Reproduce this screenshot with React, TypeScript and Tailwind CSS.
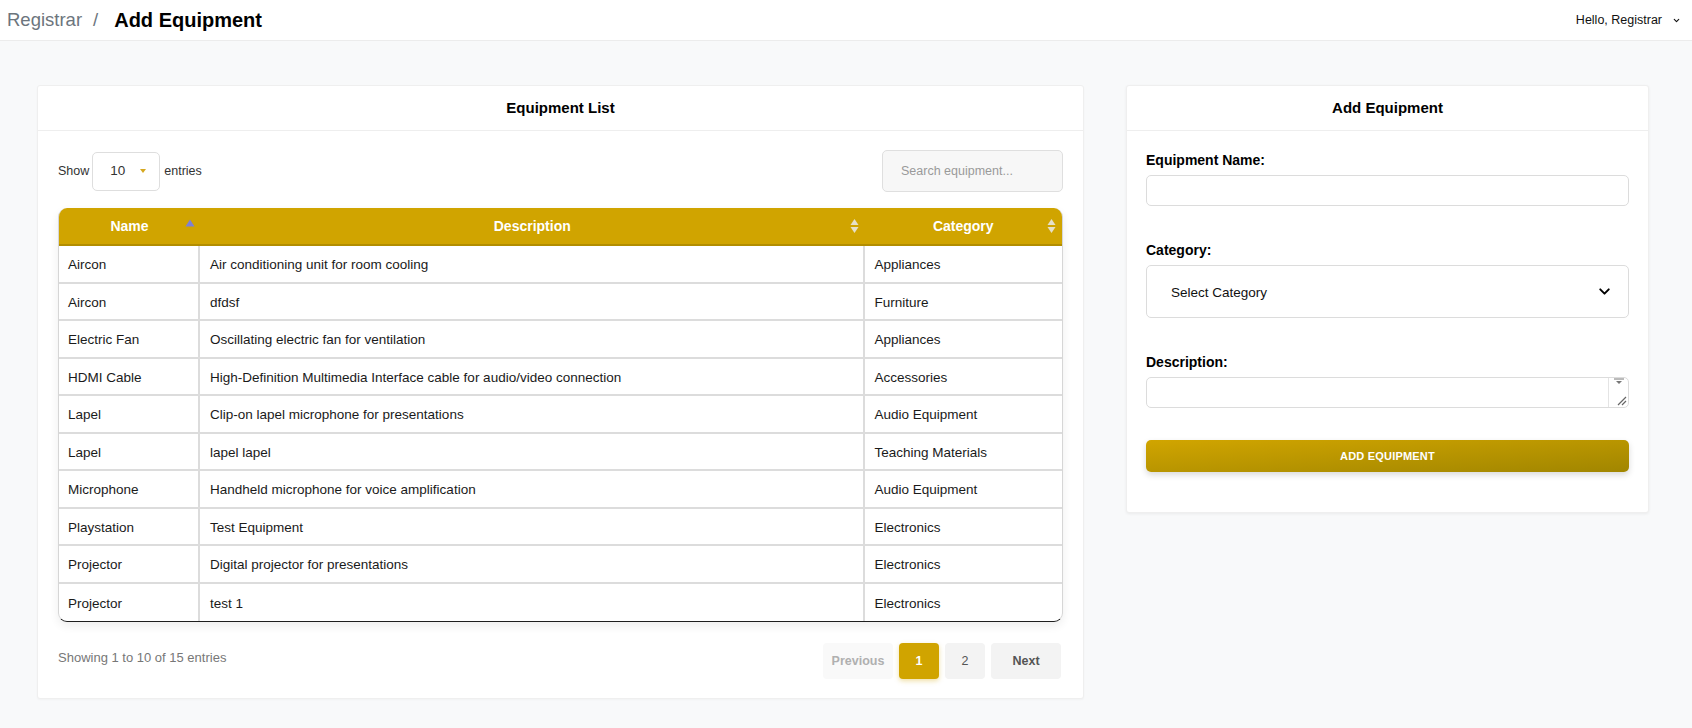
import React from "react";
import { ChevronDown } from "lucide-react";

const equipment = [
  { name: "Aircon", description: "Air conditioning unit for room cooling", category: "Appliances" },
  { name: "Aircon", description: "dfdsf", category: "Furniture" },
  { name: "Electric Fan", description: "Oscillating electric fan for ventilation", category: "Appliances" },
  { name: "HDMI Cable", description: "High-Definition Multimedia Interface cable for audio/video connection", category: "Accessories" },
  { name: "Lapel", description: "Clip-on lapel microphone for presentations", category: "Audio Equipment" },
  { name: "Lapel", description: "lapel lapel", category: "Teaching Materials" },
  { name: "Microphone", description: "Handheld microphone for voice amplification", category: "Audio Equipment" },
  { name: "Playstation", description: "Test Equipment", category: "Electronics" },
  { name: "Projector", description: "Digital projector for presentations", category: "Electronics" },
  { name: "Projector", description: "test 1", category: "Electronics" },
];

// up/down arrows for sortable columns
const SortBoth = () => (
  <svg width="9" height="16" viewBox="0 0 9 16" className="absolute right-[6px] top-1/2 -translate-y-1/2">
    <path d="M4.5 1 L8.5 7 L0.5 7 Z" fill="#e6e0c8" />
    <path d="M4.5 15 L8.5 9 L0.5 9 Z" fill="#e6e0c8" />
  </svg>
);

const SortAsc = () => (
  <svg width="10" height="8" viewBox="0 0 10 8" className="absolute right-[5px] top-[11px]">
    <path d="M5 0.5 L9.5 7.5 L0.5 7.5 Z" fill="#7d80d6" />
  </svg>
);

const App = () => {
  return (
    <div className="min-h-screen bg-[#f8f9fa] font-['Liberation_Sans',Arial,sans-serif] text-[#1a1a1a]">
      {/* Top bar */}
      <header className="h-[41px] bg-white border-b border-[#ececec] flex items-center justify-between pl-[7px] pr-[11px]">
        <div className="flex items-center">
          <span className="text-[18.5px] text-[#6c757d]">Registrar</span>
          <span className="text-[18.5px] text-[#6c757d] ml-[11px] mr-[16px]">/</span>
          <span className="text-[20px] font-bold text-black">Add Equipment</span>
        </div>
        <div className="flex items-center gap-[10px] text-[12.5px] text-[#111]">
          <span>Hello, Registrar</span>
          <ChevronDown className="w-[9px] h-[9px]" strokeWidth={3} />
        </div>
      </header>

      <main className="flex items-start gap-[42px] pl-[37px] pt-[44px] pb-[30px]">
        {/* Equipment list card */}
        <section className="w-[1047px] bg-white border border-[#efefef] rounded-[3px] shadow-[0_1px_2px_rgba(0,0,0,0.03)]">
          <div className="h-[45px] border-b border-[#eeeeee] flex items-center justify-center">
            <h2 className="text-[15px] font-bold text-black">Equipment List</h2>
          </div>

          <div className="px-[20px] pt-[19px] pb-[19px]">
            <div className="flex items-center justify-between">
              <div className="flex items-center text-[12.5px] text-[#333]">
                <span>Show</span>
                <div className="ml-[3px] mr-[4px] w-[68px] h-[39px] border border-[#dedede] rounded-[5px] flex items-center pl-[17px] pr-[13px] justify-between">
                  <span className="text-[13.5px]">10</span>
                  <svg width="6" height="4" viewBox="0 0 6 4">
                    <path d="M0 0 L6 0 L3 4 Z" fill="#d6a820" />
                  </svg>
                </div>
                <span>entries</span>
              </div>
              <input
                placeholder="Search equipment..."
                className="w-[181px] h-[42px] bg-[#f7f7f7] border border-[#dfdfdf] rounded-[5px] pl-[18px] text-[12.5px] placeholder:text-[#9a9a9a] outline-none"
              />
            </div>

            {/* Table */}
            <div className="mt-[16px] rounded-[9px] overflow-hidden border-x border-[#d6d6d6] border-b border-b-[#1f1f1f] shadow-[0_4px_10px_rgba(0,0,0,0.07)]">
              <div className="grid grid-cols-[141px_664.5px_1fr] h-[38px] bg-[#d0a400] border-b-2 border-[#b28d00] text-white text-[14px] font-bold">
                <div className="relative flex items-center justify-center">
                  Name
                  <SortAsc />
                </div>
                <div className="relative flex items-center justify-center">
                  Description
                  <SortBoth />
                </div>
                <div className="relative flex items-center justify-center">
                  Category
                  <SortBoth />
                </div>
              </div>
              {equipment.map((item, i) => (
                <div
                  key={i}
                  className={`grid grid-cols-[141px_664.5px_1fr] h-[37.5px] text-[13.5px] ${
                    i < equipment.length - 1 ? "border-b-2 border-[#dcdcdc]" : ""
                  }`}
                >
                  <div className="flex items-center pt-[3px] pl-[9px] border-r-2 border-[#dcdcdc]">{item.name}</div>
                  <div className="flex items-center pt-[3px] pl-[10px] border-r-2 border-[#dcdcdc]">{item.description}</div>
                  <div className="flex items-center pt-[3px] pl-[10px]">{item.category}</div>
                </div>
              ))}
            </div>

            <div className="mt-[21px] flex items-center justify-between">
              <span className="text-[13px] text-[#777] mb-[6px]">Showing 1 to 10 of 15 entries</span>
              <div className="flex items-center gap-[6px] mr-[2px] text-[12.5px]">
                <button className="w-[70px] h-[36px] rounded-[4px] bg-[#f9f9f9] text-[#b0b0b0] font-bold">Previous</button>
                <button className="w-[40px] h-[36px] rounded-[4px] bg-[#d0a400] text-white font-bold shadow-[0_2px_5px_rgba(208,164,0,0.35)]">1</button>
                <button className="w-[40px] h-[36px] rounded-[4px] bg-[#f3f3f3] text-[#555]">2</button>
                <button className="w-[70px] h-[36px] rounded-[4px] bg-[#f3f3f3] text-[#555] font-bold">Next</button>
              </div>
            </div>
          </div>
        </section>

        {/* Add equipment form */}
        <section className="w-[523px] bg-white border border-[#efefef] rounded-[3px] shadow-[0_1px_3px_rgba(0,0,0,0.06)]">
          <div className="h-[45px] border-b border-[#eeeeee] flex items-center justify-center">
            <h2 className="text-[15px] font-bold text-black">Add Equipment</h2>
          </div>

          <form className="px-[19px] pt-[21px] pb-[40px] flex flex-col">
            <label className="text-[14px] font-bold leading-[17px] text-black">Equipment Name:</label>
            <input className="mt-[6px] h-[31px] border border-[#dcdcdc] rounded-[5px] px-[10px] text-[13.5px] outline-none" />

            <label className="mt-[36px] text-[14px] font-bold leading-[17px] text-black">Category:</label>
            <div className="mt-[6px] h-[53px] border border-[#dcdcdc] rounded-[5px] flex items-center justify-between pl-[24px] pr-[15px]">
              <span className="text-[13.5px] text-[#111] pt-[3px]">Select Category</span>
              <ChevronDown className="w-[17px] h-[17px] text-black" strokeWidth={2.75} />
            </div>

            <label className="mt-[36px] text-[14px] font-bold leading-[17px] text-black">Description:</label>
            <div className="relative mt-[6px] h-[31px]">
              <textarea className="block w-full h-[31px] border border-[#dcdcdc] rounded-[5px] px-[10px] text-[13.5px] resize-none outline-none" />
              <div className="absolute right-[1px] top-[1px] bottom-[1px] w-[20px] border-l border-[#e4e4e4] flex flex-col items-center justify-between">
                <svg width="10" height="6" viewBox="0 0 10 6">
                  <path d="M0 1 L10 1" stroke="#777" strokeWidth="1" />
                  <path d="M2 3 L8 3 L5 6 Z" fill="#777" />
                </svg>
                <svg width="10" height="10" viewBox="0 0 10 10" className="self-end mr-[1px] mb-[1px]">
                  <path d="M1 9 L9 1 M5 9 L9 5" stroke="#666" strokeWidth="1.2" />
                </svg>
              </div>
            </div>

            <button
              type="button"
              className="mt-[32px] h-[32px] rounded-[5px] bg-gradient-to-br from-[#d1a500] to-[#a18600] text-white text-[11px] font-bold tracking-[0.2px] shadow-[0_3px_6px_rgba(0,0,0,0.15)]"
            >
              ADD EQUIPMENT
            </button>
          </form>
        </section>
      </main>
    </div>
  );
};

export default App;
